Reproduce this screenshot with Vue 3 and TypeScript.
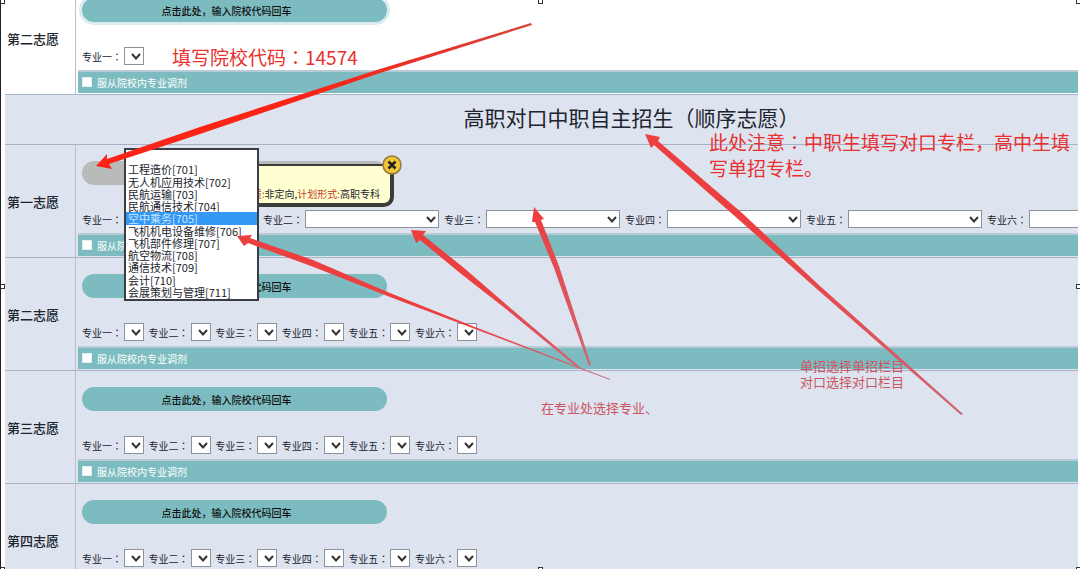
<script setup lang="ts">
import { reactive, ref } from 'vue'

interface Choice {
  id: string
  title: string
  tone: 'white' | 'tint'
  majors: string[]
  open: boolean
}

const numerals = ['一', '二', '三', '四', '五', '六']

const options: string[] = [
  '工程造价[701]',
  '无人机应用技术[702]',
  '民航运输[703]',
  '民航通信技术[704]',
  '空中乘务[705]',
  '飞机机电设备维修[706]',
  '飞机部件修理[707]',
  '航空物流[708]',
  '通信技术[709]',
  '会计[710]',
  '会展策划与管理[711]',
]

const previous: Choice[] = [
  { id: 'p2', title: '第二志愿', tone: 'white', majors: numerals.slice(0, 1), open: false },
]
const current: Choice[] = [
  { id: 'c1', title: '第一志愿', tone: 'tint', majors: numerals, open: true },
  { id: 'c2', title: '第二志愿', tone: 'tint', majors: numerals, open: false },
  { id: 'c3', title: '第三志愿', tone: 'tint', majors: numerals, open: false },
  { id: 'c4', title: '第四志愿', tone: 'tint', majors: numerals, open: false },
]
const groups = [
  { id: 'previous', heading: '', choices: previous },
  { id: 'current', heading: '高职对口中职自主招生（顺序志愿）', choices: current },
]

const picked = ref('空中乘务[705]')
const obey = reactive<Record<string, boolean>>({})
const handles = ['tl', 'tc', 'tr', 'ml', 'mr', 'bl', 'bc', 'br']
</script>

<template>
  <main class="page">
    <div v-for="group in groups" :key="group.id" :class="['group', group.id]">
      <h1 v-if="group.heading" class="heading">{{ group.heading }}</h1>
      <section v-for="choice in group.choices" :key="choice.id" :class="['choice', choice.tone]">
        <h2 class="name">{{ choice.title }}</h2>
        <div class="body">
          <button type="button" :class="['pill', { used: choice.open }]">
            <span v-if="!choice.open">点击此处，输入院校代码回车</span>
          </button>

          <div v-if="choice.open" class="tip">
            <span><em>性质:</em>非定向,<em>计划形式:</em>高职专科</span>
            <button type="button" class="close" aria-label="关闭">
              <svg viewBox="0 0 20 20" width="20" height="20">
                <circle cx="10" cy="10" r="9" fill="#f2c437" stroke="#8f7a3c" stroke-width="1.5" />
                <path d="M6.5 6.5 13.5 13.5M13.5 6.5 6.5 13.5" stroke="#222" stroke-width="2.6" />
              </svg>
            </button>
          </div>

          <div :class="['majors', { wide: choice.open, single: choice.majors.length === 1 }]">
            <div v-for="(n, i) in choice.majors" :key="n" class="major">
              <label :for="choice.id + n">专业{{ n }}<span class="colon">：</span></label>
              <span class="box">
                <select v-if="choice.open && i === 0" :id="choice.id + n" v-model="picked">
                  <option v-for="o in options" :key="o">{{ o }}</option>
                </select>
                <select v-else :id="choice.id + n"><option></option></select>
                <svg class="chevron" viewBox="0 0 10 7" width="10" height="7">
                  <path d="M1 1 5 5.4 9 1" fill="none" stroke="#333" stroke-width="2" />
                </svg>
                <ul v-if="choice.open && i === 0" class="list" role="listbox" aria-label="专业一">
                  <li role="option"></li>
                  <li
                    v-for="o in options"
                    :key="o"
                    role="option"
                    :class="{ on: o === picked }"
                    :aria-selected="o === picked"
                    @click="picked = o"
                  >{{ o }}</li>
                </ul>
              </span>
            </div>
          </div>

          <label class="obey">
            <input v-model="obey[choice.id]" type="checkbox" />
            <span>服从院校内专业调剂</span>
          </label>
        </div>
      </section>
    </div>

    <svg class="arrows" viewBox="0 0 1080 569" width="1080" height="569" aria-hidden="true">
      <defs>
        <linearGradient id="g1" gradientUnits="userSpaceOnUse" x1="96" y1="166" x2="532" y2="24">
          <stop offset="0.5" stop-color="#fb2416" /><stop offset="1" stop-color="#d6423c" />
        </linearGradient>
        <linearGradient id="g2" gradientUnits="userSpaceOnUse" x1="400" y1="220" x2="610" y2="380">
          <stop offset="0.4" stop-color="#ec3f3f" /><stop offset="1" stop-color="#c96f80" />
        </linearGradient>
        <linearGradient id="g3" gradientUnits="userSpaceOnUse" x1="645" y1="134" x2="962" y2="414">
          <stop offset="0.4" stop-color="#ec3f3f" /><stop offset="1" stop-color="#cf6874" />
        </linearGradient>
      </defs>
      <path fill="url(#g1)" d="M96 166 107 154 107 159 200 127 380 69 531 23 532 25 380 73 200 134 109 164 112 169Z" />
      <g fill="url(#g2)">
        <path d="M534 207 544 219 541 220 559 266 591 365 589 366 554 268 535 222 532 222Z" />
        <path d="M411 230 426 231 423 235 464 268 508 306 581 368 579 369 506 309 460 273 420 240 416 243Z" />
        <path d="M237 236 252 235 250 238 313 260 390 293 475 327 610 379 610 380 475 329 390 297 311 266 248 243 244 246Z" />
      </g>
      <path fill="url(#g3)" d="M645 134 660 137 658 141 742 213 820 286 963 414 961 415 818 290 738 219 654 145 651 148Z" />
    </svg>

    <p class="note code">填写院校代码<span class="colon">：</span>14574</p>
    <p class="note notice">此处注意<span class="colon">：</span>中职生填写对口专栏，高中生填<br />写单招专栏。</p>
    <p class="note column">单招选择单招栏目<br />对口选择对口栏目</p>
    <p class="note major-hint">在专业处选择专业、</p>
    <i v-for="h in handles" :key="h" :class="['handle', h]"></i>
  </main>
</template>

<style>
body {
  margin: 0;
  background: #fff;
}
</style>

<style scoped>
.page {
  position: relative;
  box-sizing: border-box;
  height: 100vh;
  overflow: hidden;
  padding: 0 2px 0 4px;
  border-left: 1px solid #222;
  margin: 0;
  background: #fff;
  color: #20242c;
  font-family: "Noto Sans CJK SC", sans-serif;
  font-size: 10px;
}
.page * {
  box-sizing: border-box;
}
.colon {
  font-family: "Noto Sans CJK JP", sans-serif;
}
.previous {
  margin-top: -18px;
}
.heading {
  height: 50px;
  margin: 0;
  padding: 0 0 4px 180px;
  border-bottom: 1px solid #a7b1c6;
  background: #dee3f0;
  text-align: center;
  font-size: 21px;
  font-weight: 400;
  line-height: 44px;
}
.choice {
  display: grid;
  grid-template-columns: 71px 1fr;
  height: 113px;
  border-bottom: 1px solid #a9b4c6;
}
.tint {
  background: #dee3f0;
}
.name {
  display: flex;
  align-items: center;
  margin: 0;
  padding-left: 2px;
  border-right: 1px solid #b9c1d0;
  font-size: 13px;
  font-weight: 500;
  white-space: nowrap;
}
.body {
  position: relative;
  display: flex;
  flex-direction: column;
  min-width: 0;
  padding: 16px 0 1px 1px;
}
.pill {
  flex: none;
  width: 305px;
  height: 24px;
  margin: 0 0 0 5px;
  padding: 0 16px 0 0;
  border: 0;
  border-radius: 12px;
  background: #7cbcc0;
  color: #111;
  font: inherit;
  font-weight: 500;
}
.white .pill {
  box-shadow: 0 0 0 3px #dcebf1;
}
.pill.used {
  background: #b9bbba;
}
.majors {
  display: flex;
  justify-content: space-between;
  width: 395px;
  margin: 25px 0 auto 5px;
}
.majors.single {
  justify-content: flex-start;
}
.majors.wide {
  justify-content: flex-start;
  gap: 5px;
  width: auto;
  overflow-x: clip;
}
.major {
  display: flex;
  flex: none;
  align-items: center;
  height: 18px;
}
.major label {
  width: 42px;
  white-space: nowrap;
}
.box {
  position: relative;
  width: 20px;
  height: 18px;
}
.wide .box {
  width: 134px;
}
.box select {
  display: block;
  width: 100%;
  height: 100%;
  padding: 0 14px 0 2px;
  border: 1px solid #8b929c;
  border-radius: 0;
  background: #fff;
  color: #222;
  font: inherit;
  appearance: none;
}
.chevron {
  position: absolute;
  top: 6px;
  right: 3px;
  pointer-events: none;
}
.list {
  position: absolute;
  z-index: 3;
  top: -62px;
  left: 0;
  display: grid;
  grid-template-rows: repeat(12, 1fr);
  width: 135px;
  height: 153px;
  margin: 0;
  padding: 1px 0;
  border: 2px solid #3b3f45;
  background: #fff;
  list-style: none;
  font-size: 11px;
  line-height: 12px;
}
.list li {
  min-height: 0;
  padding-left: 2px;
  white-space: nowrap;
}
.list .on {
  background: #3399f5;
  color: #c9e4ff;
}
.tip {
  position: absolute;
  z-index: 2;
  top: 19px;
  left: 60px;
  width: 258px;
  height: 43px;
  padding: 20px 10px 0 0;
  border: 2px solid #3c3c38;
  border-width: 2px 4px 4px 2px;
  border-radius: 4px 4px 10px 4px;
  background: #ffffd2;
  line-height: 16px;
  text-align: right;
  white-space: nowrap;
}
.tip em {
  color: #c23a1e;
  font-style: normal;
}
.close {
  position: absolute;
  top: -11px;
  right: -12px;
  width: 20px;
  height: 20px;
  padding: 0;
  border: 0;
  background: none;
}
.close svg {
  display: block;
}
.obey {
  display: flex;
  align-items: center;
  gap: 5px;
  flex: none;
  height: 23px;
  padding-left: 4px;
  border-top: 2px solid #b7cad6;
  margin-left: 1px;
  background: #7cbcc0;
  color: #fff;
}
.obey input {
  width: 10px;
  height: 10px;
  margin: 0 0 2px;
  border: 1px solid #e4edf0;
  background: #fff;
  appearance: none;
}
.obey input:checked {
  background: #356;
}
.arrows {
  position: absolute;
  z-index: 4;
  top: 0;
  left: -1px;
  pointer-events: none;
}
.note {
  position: absolute;
  z-index: 5;
  margin: 0;
  color: #e8302e;
  white-space: nowrap;
}
.code {
  top: 44px;
  left: 171px;
  font-size: 19px;
  line-height: 26px;
}
.notice {
  top: 129px;
  left: 708px;
  font-size: 19px;
  line-height: 26px;
}
.column {
  top: 358px;
  left: 799px;
  color: #cc5560;
  font-size: 13px;
  line-height: 16px;
}
.major-hint {
  top: 400px;
  left: 540px;
  color: #cc5560;
  font-size: 13px;
  line-height: 16px;
}
.handle {
  position: absolute;
  z-index: 6;
  width: 5px;
  height: 5px;
  border: 1px solid #333;
  background: #fff;
}
.tl, .tc, .tr { top: -1px; }
.ml, .mr { top: 50%; margin-top: -1px; }
.bl, .bc, .br { bottom: -3px; }
.tl, .ml, .bl { left: -1px; }
.tc, .bc { left: 50%; margin-left: -3px; }
.tr, .mr, .br { right: -1px; }
</style>
